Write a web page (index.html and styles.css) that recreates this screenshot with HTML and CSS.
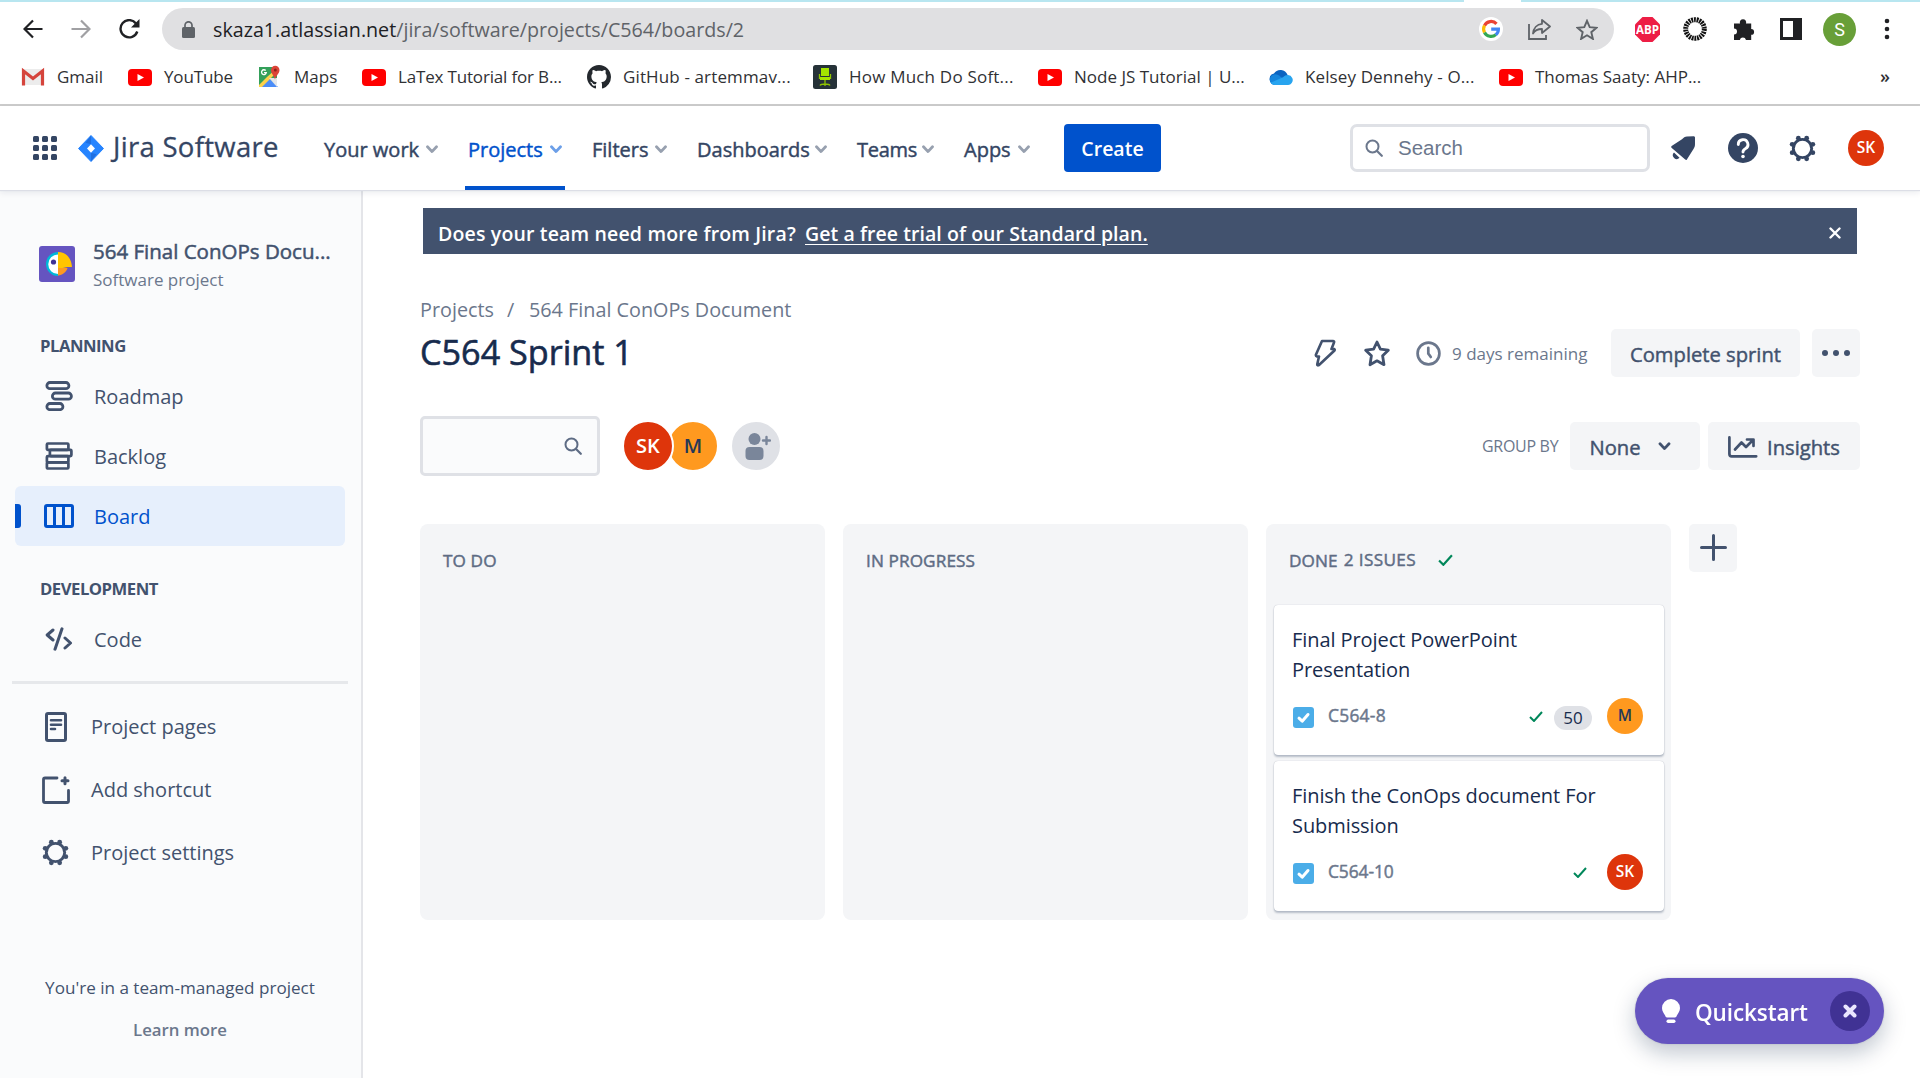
FILE: index.html
```html
<!DOCTYPE html>
<html lang="en">
<head>
<meta charset="utf-8">
<title>C564 Sprint 1 - Jira</title>
<link rel="stylesheet" href="styles.css">
</head>
<body>
<svg class="defs" width="0" height="0" aria-hidden="true">
  <symbol id="i-youtube" viewBox="0 0 24 24"><rect y="4" width="24" height="17" rx="4" fill="#f00"/><path d="M9.500 9v7l6.500-3.500z" fill="#fff"/></symbol>
  <symbol id="i-chevron" viewBox="0 0 12 9"><path d="M1.500 1.800 6 6.600l4.500-4.800" fill="none" stroke="currentColor" stroke-width="2.800" stroke-linecap="round" stroke-linejoin="round"/></symbol>
  <symbol id="i-search" viewBox="0 0 18 18"><circle cx="7.500" cy="7.500" r="6" fill="none" stroke="currentColor" stroke-width="2"/><path d="m12 12 4.800 4.800" stroke="currentColor" stroke-width="2.200" stroke-linecap="round"/></symbol>
  <symbol id="i-gear" viewBox="0 0 28 28"><g fill="currentColor"><circle cx="14" cy="14" r="11"/><circle cx="9.700" cy="3.300" r="2.500"/><circle cx="18.300" cy="3.300" r="2.500"/><circle cx="9.700" cy="24.700" r="2.500"/><circle cx="18.300" cy="24.700" r="2.500"/><circle cx="3.300" cy="9.700" r="2.500"/><circle cx="3.300" cy="18.300" r="2.500"/><circle cx="24.700" cy="9.700" r="2.500"/><circle cx="24.700" cy="18.300" r="2.500"/></g><circle cx="14" cy="14" r="8"/></symbol>
  <symbol id="i-check" viewBox="0 0 14 11"><path d="m1 6 4 4 8-9" fill="none" stroke="#00875a" stroke-width="2"/></symbol>
  <symbol id="i-task" viewBox="0 0 21 21"><rect width="21" height="21" rx="3" fill="#4bade8"/><path d="m6 11.200 3.200 3L15 7.500" fill="none" stroke="#fff" stroke-width="3" stroke-linecap="round" stroke-linejoin="round"/></symbol>
</svg>

<header class="chrome">
  <div class="tabstrip"></div>
  <div class="toolbar">
    <div class="nav-buttons">
      <svg width="20" height="20" viewBox="0 0 20 20" fill="none" stroke="#202124" stroke-width="2.200"><path d="M19.500 10H2M10 1.500 1.500 10l8.500 8.500"/></svg>
      <svg width="20" height="20" viewBox="0 0 20 20" fill="none" stroke="#a0a0a3" stroke-width="2.200"><path d="M.5 10H18M10 1.500l8.500 8.500-8.500 8.500"/></svg>
      <svg width="21" height="20" viewBox="0 0 21 20"><path d="M17 4.500A8.600 8.600 0 1 0 18.300 12.500" fill="none" stroke="#202124" stroke-width="2.400"/><path d="M20.500 0v8.500H12z" fill="#202124"/></svg>
    </div>
    <div class="omnibox">
      <svg width="13" height="17" viewBox="0 0 13 17"><rect y="6" width="13" height="11" rx="1.500" fill="#5f6368"/><path d="M3 7V4.300a3.500 3.500 0 0 1 7 0V7" fill="none" stroke="#5f6368" stroke-width="1.700"/></svg>
      <span class="url"><b>skaza1.atlassian.net</b>/jira/software/projects/C564/boards/2</span>
      <svg class="google" width="24" height="24" viewBox="0 0 24 24"><circle cx="12" cy="12" r="12" fill="#fff"/><g fill="none" stroke-width="3.200"><path d="M17.500 6.800A7.400 7.400 0 0 0 5.500 8.600" stroke="#ea4335"/><path d="M5.500 8.500a7.400 7.400 0 0 0 0 7" stroke="#fbbc05"/><path d="M5.500 15.400a7.400 7.400 0 0 0 11.400 2.200" stroke="#34a853"/><path d="M16.800 17.700a7.300 7.300 0 0 0 2.600-5.500H12.200" stroke="#4285f4"/></g></svg>
      <svg class="share" width="23" height="22" viewBox="0 0 23 22" fill="none" stroke="#5f6368" stroke-width="1.800"><path d="M1 6v15h17v-4"/><path d="M14 2l8 6.500-8 6.500v-4c-4 0-7 1-9 4.500C5.500 10 9 6.200 14 5.800z" stroke-linejoin="round"/></svg>
      <svg class="star" width="22" height="21" viewBox="0 0 22 21"><path d="m11 1.800 2.700 6.300 6.800.6-5.200 4.500 1.600 6.700L11 16.300l-5.900 3.600 1.600-6.700L1.500 8.700l6.800-.6z" fill="none" stroke="#5f6368" stroke-width="1.900"/></svg>
    </div>
    <div class="extensions">
      <svg width="25" height="25" viewBox="0 0 25 25"><path d="M7.500 0h10L25 7.500v10L17.500 25h-10L0 17.500v-10z" fill="#ed1e45"/><text x="12.500" y="16.900" text-anchor="middle" textLength="23" lengthAdjust="spacingAndGlyphs" class="abp">ABP</text></svg>
      <svg width="24" height="24" viewBox="0 0 24 24"><circle cx="12" cy="12" r="9.300" fill="none" stroke="#111" stroke-width="5" stroke-dasharray="1.850 .807"/></svg>
      <svg width="23" height="22" viewBox="0 0 23 22"><path d="M1 5.500h6a3.200 3.200 0 1 1 6 0h5.200V11a2.900 2.900 0 1 1 0 5.800V22h-5.200a3.200 3.200 0 0 0-6.200 0H1v-5.500a3 3 0 0 0 0-6z" fill="#202124"/></svg>
      <svg width="22" height="22" viewBox="0 0 22 22"><path d="M0 0h22v22H0zM3 3v16h10V3z" fill="#202124" fill-rule="evenodd"/></svg>
      <span class="profile">S</span>
      <svg width="6" height="22" viewBox="0 0 6 22" fill="#202124"><circle cx="3" cy="3" r="2.300"/><circle cx="3" cy="11" r="2.300"/><circle cx="3" cy="19" r="2.300"/></svg>
    </div>
  </div>
  <nav class="bookmarks">
    <a><svg viewBox="0 0 24 24"><path d="M1 4h22v16H1z" fill="#ececec"/><path d="M2.500 20.500V6L12 13.500 21.500 6v14.500" fill="none" stroke="#d5443c" stroke-width="3.200"/></svg>Gmail</a>
    <a class="t-youtube"><svg><use href="#i-youtube"/></svg>YouTube</a>
    <a><svg viewBox="0 0 24 24"><path d="M1 2h18v20H1z" fill="#34a05a"/><path d="m2 22 9-9 9 9z" fill="#4b8df8"/><path d="m1 20 8-8L19 3v4L4 22H1z" fill="#fdd24b"/><path d="m11 13 8 9v-9z" fill="#e4e6ea"/><path d="M17 14.500c-1-4-4-6-4-9.500a4.200 4.200 0 1 1 8.500 0c0 3.500-3.500 5.500-4.500 9.500z" fill="#dc4437"/><circle cx="17.300" cy="4.900" r="1.500" fill="#8c231b"/><path d="M7.700 5.500a2.400 2.400 0 1 0 .6 2.200H6" fill="none" stroke="#fff" stroke-width="1.300"/></svg>Maps</a>
    <a class="t-latex"><svg><use href="#i-youtube"/></svg>LaTex Tutorial for B...</a>
    <a class="t-github"><svg viewBox="0 0 16 16"><path fill="#24292e" d="M8 0C3.580 0 0 3.580 0 8c0 3.540 2.290 6.530 5.470 7.590.4.070.55-.17.55-.38 0-.19-.01-.82-.01-1.490-2.010.37-2.530-.49-2.690-.94-.09-.23-.48-.94-.82-1.130-.28-.15-.68-.52-.01-.53.63-.01 1.080.58 1.230.82.72 1.210 1.870.87 2.330.66.070-.52.280-.87.510-1.070-1.780-.2-3.640-.89-3.640-3.950 0-.87.310-1.590.820-2.150-.08-.2-.36-1.020.080-2.120 0 0 .67-.21 2.200.82.640-.18 1.320-.27 2-.27s1.360.09 2 .27c1.530-1.040 2.200-.82 2.200-.82.440 1.100.160 1.920.080 2.120.510.560.820 1.270.820 2.150 0 3.070-1.870 3.750-3.650 3.950.290.250.540.730.540 1.480 0 1.070-.01 1.930-.01 2.200 0 .21.150.46.550.38A8 8 0 0 0 16 8c0-4.420-3.580-8-8-8z"/></svg>GitHub - artemmav...</a>
    <a class="t-soft"><svg viewBox="0 0 24 24"><rect width="24" height="24" rx="2.500" fill="#263238"/><path d="M8 3h8v8H8zM7 12h10v3H7z" fill="#a4e400"/><path d="M12 15v6M7 20.500c1-2 9-2 10 0M6.500 9v5M17.500 9v5" fill="none" stroke="#8fc400" stroke-width="1.300"/></svg>How Much Do Soft...</a>
    <a><svg><use href="#i-youtube"/></svg>Node JS Tutorial | U...</a>
    <a class="t-kelsey"><svg viewBox="0 0 24 24"><path d="M6 19.500a5.500 5.500 0 0 1-1-10.900 7.500 7.500 0 0 1 13.500 1.200L21 15l-9 4z" fill="#0a63c0"/><path d="M1 16a5.500 5.500 0 0 1 8.500-5.700L19 17l-4 3H6a5.300 5.300 0 0 1-5-4z" fill="#1585dc"/><path d="M19 10a5 5 0 0 1 3.700 8A4.500 4.500 0 0 1 19.200 20H6c-2 0-3.500-1-4.300-2.200L14 12.300a6.500 6.500 0 0 1 5-2.300z" fill="#28a4ef"/></svg>Kelsey Dennehy - O...</a>
    <a><svg><use href="#i-youtube"/></svg>Thomas Saaty: AHP...</a>
    <span class="more">»</span>
  </nav>
</header>

<header class="topnav">
  <svg class="switcher" width="24" height="24" viewBox="0 0 24 24" fill="#344563"><rect width="6" height="6" rx="1.500"/><rect x="9" width="6" height="6" rx="1.500"/><rect x="18" width="6" height="6" rx="1.500"/><rect y="9" width="6" height="6" rx="1.500"/><rect x="9" y="9" width="6" height="6" rx="1.500"/><rect x="18" y="9" width="6" height="6" rx="1.500"/><rect y="18" width="6" height="6" rx="1.500"/><rect x="9" y="18" width="6" height="6" rx="1.500"/><rect x="18" y="18" width="6" height="6" rx="1.500"/></svg>
  <a class="logo">
    <svg width="26" height="27" viewBox="0 0 26 27"><path d="M13 .5 25.500 13.500 13 26.500.5 13.500z" fill="#2684ff" stroke="#2684ff" stroke-linejoin="round"/><path d="M13 .5v8.700l-5.500-1.500zM13 26.500v-8.700l5.500 1.500z" fill="#1f6fe0"/><path d="m13 9.300 4 4.200-4 4.200-4-4.200z" fill="#fff"/></svg>
    <span>Jira Software</span>
  </a>
  <nav class="menu">
    <a>Your work<svg><use href="#i-chevron"/></svg></a>
    <a class="active">Projects<svg><use href="#i-chevron"/></svg></a>
    <a>Filters<svg><use href="#i-chevron"/></svg></a>
    <a>Dashboards<svg><use href="#i-chevron"/></svg></a>
    <a class="teams">Teams<svg><use href="#i-chevron"/></svg></a>
    <a>Apps<svg><use href="#i-chevron"/></svg></a>
  </nav>
  <button class="create">Create</button>
  <div class="search"><svg width="18" height="18"><use href="#i-search"/></svg>Search</div>
  <div class="tools">
    <svg width="25" height="26" viewBox="0 0 25 26" fill="#344563"><path d="M24 3c.1-1.200-.5-1.800-1.500-1.800L16 1.500c-2 .2-3.500 1.200-5 2.800L1 10.800c-1 .7-1.100 1.400-.2 2.200l13.400 11.500c.9.800 1.700.6 2-.4L22.500 14c1-1.500 1.500-3 1.500-5z"/><path d="M3 17.500 8.500 22.800A3.600 3.600 0 0 1 3 17.500z"/></svg>
    <svg width="30" height="30" viewBox="0 0 30 30"><circle cx="15" cy="15" r="15" fill="#344563"/><path d="M10.300 11.500a4.800 4.800 0 1 1 7 4.200c-1.500.8-2.300 1.500-2.300 3.300" fill="none" stroke="#fff" stroke-width="2.900" stroke-linecap="round"/><circle cx="15" cy="23.500" r="1.800" fill="#fff"/></svg>
    <svg class="gear" width="27" height="27"><use href="#i-gear"/></svg>
    <span class="avatar red">SK</span>
  </div>
</header>

<div class="page">
  <aside class="sidebar">
    <div class="project">
      <svg width="36" height="36" viewBox="0 0 36 36"><rect width="36" height="36" rx="3" fill="#6554c0"/><path d="M19 6a12 12 0 0 0 0 24z" fill="#00b8d9"/><path d="M19 8.500a9.700 9.700 0 0 0 0 19.500z" fill="#fff"/><path d="M19 6c8 0 13.500 6 14 15h-4.500L19 23z" fill="#ffc400"/><path d="M19 22h9.500c-1 4-5 7-9.500 7.500z" fill="#ff991f"/><circle cx="14.500" cy="16" r="2.600" fill="#403294"/></svg>
      <div><strong>564 Final ConOPs Docu...</strong><small>Software project</small></div>
    </div>
    <h2>PLANNING</h2>
    <a class="item roadmap"><svg width="28" height="30" viewBox="0 0 28 30" fill="none" stroke="#42526e" stroke-width="2.800"><rect x="1.900" y="1.500" width="22" height="6.200" rx="3"/><rect x="7.400" y="12" width="19" height="6.200" rx="3"/><rect x="1.900" y="22.500" width="16" height="6.200" rx="3"/></svg>Roadmap</a>
    <a class="item backlog"><svg width="28" height="28" viewBox="0 0 28 28" fill="none" stroke="#42526e" stroke-width="2.700"><rect x="1.900" y="1.500" width="21.500" height="6.300" rx="1"/><rect x="4.900" y="7.800" width="21.500" height="6.300" rx="1"/><rect x="1.900" y="14.100" width="21.500" height="6.200" rx="1"/><rect x="1.900" y="20.300" width="21.500" height="6.200" rx="1"/></svg>Backlog</a>
    <a class="item board"><svg width="30" height="24" viewBox="0 0 30 24" fill="none" stroke="#0052cc" stroke-width="3"><rect x="1.500" y="1.500" width="27" height="21" rx="1.500"/><path d="M10.500 2v20M19.500 2v20"/></svg>Board</a>
    <h2 class="dev">DEVELOPMENT</h2>
    <a class="item code"><svg width="28" height="24" viewBox="0 0 28 24" fill="none" stroke="#42526e" stroke-width="3" stroke-linecap="round" stroke-linejoin="round"><path d="M8 3 2.200 8 8 13M20 11l5.500 5L20 21M17 1.800 10 22.200"/></svg>Code</a>
    <hr>
    <a class="item low"><svg width="28" height="30" viewBox="0 0 28 30" fill="none" stroke="#42526e" stroke-width="3"><rect x="4.500" y="1.500" width="19" height="27" rx="1.500"/><path d="M9 8.200h10M9 12.800h10M9 17h4" stroke-width="2.600" stroke-linecap="round"/></svg>Project pages</a>
    <a class="item low"><svg width="28" height="28" viewBox="0 0 28 28" fill="none" stroke="#42526e" stroke-width="2.800" stroke-linecap="round"><path d="M15 2H3Q1.500 2 1.500 3.500V25q0 1.500 1.500 1.500h22.500q1 0 1-1V14.500"/><path d="M23 1.800v6M20 4.800h6" stroke-width="3"/></svg>Add shortcut</a>
    <a class="item low"><svg class="gear side" width="27" height="27"><use href="#i-gear"/></svg>Project settings</a>
    <footer><p>You're in a team-managed project</p><a>Learn more</a></footer>
  </aside>

  <main>
    <div class="banner"><span>Does your team need more from Jira?</span><a>Get a free trial of our Standard plan.</a><svg width="12" height="12" viewBox="0 0 12 12"><path d="m1.500 1.500 9 9m0-9-9 9" stroke="#fff" stroke-width="2.400" stroke-linecap="round"/></svg></div>
    <div class="crumbs"><span>Projects</span><i>/</i><span>564 Final ConOPs Document</span></div>
    <div class="headline">
      <h1>C564 Sprint 1</h1>
      <div class="actions">
        <svg width="22" height="28" viewBox="0 0 22 28"><path d="M8 2h11q1.500 0 1 1.500L17.500 10H20q1 .5.500 1.500L5 26q-2 1-1.700-1L5 17.500H3q-1.500-.5-1-2z" fill="none" stroke="#42526e" stroke-width="2.600" stroke-linejoin="round"/></svg>
        <svg width="26" height="27" viewBox="0 0 26 27"><path d="m13 2 3.400 7.200 7.900 1-5.700 5.600 1.400 8.900-7-3.900-7 3.900 1.400-8.900-5.700-5.600 7.900-1z" fill="none" stroke="#42526e" stroke-width="2.800" stroke-linejoin="round"/></svg>
        <svg width="25" height="25" viewBox="0 0 25 25" fill="none" stroke="#6b778c" stroke-width="2.700"><circle cx="12.500" cy="12.500" r="10.900"/><path d="M12.300 6.800v5.700l2.500 3.500" stroke-linecap="round"/></svg>
        <span class="remaining">9 days remaining</span>
        <button class="btn complete">Complete sprint</button>
        <button class="btn dots"><svg width="28" height="6" viewBox="0 0 28 6" fill="#42526e"><circle cx="3" cy="3" r="3"/><circle cx="14" cy="3" r="3"/><circle cx="25" cy="3" r="3"/></svg></button>
      </div>
    </div>
    <div class="filters">
      <div class="field"><svg width="18" height="18"><use href="#i-search"/></svg></div>
      <div class="people"><span class="avatar big red">SK</span><span class="avatar big orange">M</span><span class="avatar big add"><svg width="26" height="27" viewBox="0 0 26 27" fill="#7a869a"><circle cx="9.500" cy="6" r="6"/><rect x=".5" y="14" width="18" height="13" rx="4"/><path d="M21.500 4v7M18 7.500h7" stroke="#7a869a" stroke-width="2.400" stroke-linecap="round"/></svg></span></div>
      <span class="groupby">GROUP BY</span>
      <button class="btn none">None<svg width="13" height="9"><use href="#i-chevron"/></svg></button>
      <button class="btn insights"><svg width="30" height="22" viewBox="0 0 30 22" fill="none" stroke="#42526e" stroke-width="2.700" stroke-linecap="round" stroke-linejoin="round"><path d="M1.400 1.400V18q0 2.300 2.300 2.300h24.500M7 13.500l6.500-7 4.500 4.500 7-7M19 3.500h6.500V10"/></svg>Insights</button>
    </div>
    <div class="columns">
      <section class="column"><h3>TO DO</h3></section>
      <section class="column"><h3>IN PROGRESS</h3></section>
      <section class="column">
        <h3 class="done">DONE <em>2 ISSUES</em><svg width="15" height="12"><use href="#i-check"/></svg></h3>
        <article class="card">
          <p>Final Project PowerPoint<br>Presentation</p>
          <div class="meta"><svg width="21" height="21"><use href="#i-task"/></svg><span class="key">C564-8</span><svg class="tick" width="14" height="11"><use href="#i-check"/></svg><span class="points">50</span><span class="avatar orange">M</span></div>
        </article>
        <article class="card">
          <p>Finish the ConOps document For<br>Submission</p>
          <div class="meta"><svg width="21" height="21"><use href="#i-task"/></svg><span class="key long">C564-10</span><svg class="tick" width="14" height="11"><use href="#i-check"/></svg><span class="avatar red">SK</span></div>
        </article>
      </section>
      <button class="btn plus"><svg width="27" height="27" viewBox="0 0 27 27"><path d="M13.500 1.500v24M1.500 13.500h24" stroke="#42526e" stroke-width="3" stroke-linecap="round"/></svg></button>
    </div>
  </main>
</div>

<div class="quickstart">
  <svg width="18" height="24" viewBox="0 0 18 24" fill="#fff"><path d="M9 0a9 9 0 0 1 9 9c0 3.500-1.800 5-3 7.300-.6 1.400-1 2.200-2 2.200H5c-1 0-1.400-.8-2-2.200C1.800 14 0 12.500 0 9a9 9 0 0 1 9-9z"/><rect x="4.500" y="20.500" width="9" height="3.500" rx="1.700"/></svg>
  <span>Quickstart</span>
  <b><svg width="14" height="14" viewBox="0 0 14 14"><path d="m2.500 2.500 9 9m0-9-9 9" stroke="#eae6ff" stroke-width="4" stroke-linecap="round"/></svg></b>
</div>
</body>
</html>
```
FILE: styles.css
```css
* { box-sizing: border-box; }
body { margin: 0; height: 1078px; overflow: hidden; background: #fff; font-family: "Open Sans", "Noto Sans", sans-serif; color: #42526e; white-space: nowrap; }
svg { flex: none; display: block; }
button { font: inherit; color: inherit; border: 0; margin: 0; padding: 0; }
.defs { position: absolute; }

/* browser chrome */
.chrome { height: 106px; border-bottom: 2px solid #cbcbcb; color: #3c4043; }
.tabstrip { height: 2px; background: linear-gradient(90deg, #b8e6f0 1464px, #fff 1464px 1521px, #b8e6f0 1521px); }
.toolbar { display: flex; height: 54px; align-items: center; }
.nav-buttons { display: flex; gap: 28px; width: 162px; padding-left: 23px; }
.omnibox { display: flex; align-items: center; width: 1452px; height: 42px; border-radius: 21px; background: #e0e0e2; padding-left: 20px; }
.url { width: 1263px; margin-left: 18px; font-size: 19.700px; color: #5f6368; }
.url b { font-weight: 400; color: #202124; }
.google { margin-left: 3px; }
.share { margin-left: 25px; }
.star { margin-left: 25px; }
.extensions { display: flex; align-items: center; margin-left: 21px; }
.extensions > :nth-child(2) { margin-left: 23px; }
.extensions > :nth-child(3) { margin-left: 26px; }
.extensions > :nth-child(4) { margin-left: 24px; }
.extensions > :nth-child(5) { margin-left: 21px; }
.extensions > :nth-child(6) { margin-left: 28px; }
.abp { font: 700 13px "Open Sans", sans-serif; fill: #fff; }
.profile { width: 33px; height: 33px; border-radius: 50%; background: #689f38; color: #fff; font: 18px/33px Roboto, sans-serif; text-align: center; }
.bookmarks { display: grid; grid-template-columns: 107px 130px 104px 225px 226px 225px 231px 230px 381px auto; padding-left: 21px; height: 42px; align-items: center; font-size: 17px; color: #303134; }
.bookmarks a { display: flex; align-items: center; gap: 12px; line-height: 24px; padding-bottom: 1px; }
.bookmarks svg { width: 24px; height: 24px; }
.t-youtube { letter-spacing: -.15px; }
.t-latex { letter-spacing: -.17px; }
.t-github { letter-spacing: .13px; }
.t-soft { letter-spacing: .2px; }
.t-kelsey { letter-spacing: .12px; }
.more { font-weight: 600; font-size: 18px; padding-bottom: 3px; }

/* product navigation */
.topnav { position: relative; z-index: 1; display: flex; height: 84px; align-items: center; padding-left: 33px; box-shadow: 0 1px 1px #dcdee6, 0 3px 6px #091e4214; background: #fff; color: #344563; }
.logo { display: flex; align-items: center; width: 246px; margin-left: 21px; }
.logo span { margin: -3px 0 0 9px; font-size: 27.500px; letter-spacing: .3px; -webkit-text-stroke: .3px; }
.menu { display: grid; grid-template-columns: 114px 94px 75px 130px 77px 66px; gap: 30px; width: 740px; height: 84px; font-size: 20px; -webkit-text-stroke: .45px; }
.menu a { display: flex; align-items: center; justify-content: space-between; position: relative; padding-top: 2px; }
.menu svg { width: 12px; height: 9px; color: #97a0af; }
.menu .active { color: #0052cc; }
.menu .teams { letter-spacing: -.3px; }
.menu .active svg { color: #6c9fe8; }
.menu .active::after { content: ""; position: absolute; left: -3px; right: -3px; bottom: 0; height: 4px; background: #0052cc; }
.create { width: 97px; height: 48px; padding-top: 1px; border-radius: 4px; background: #0052cc; color: #fff; font-size: 19.500px; font-weight: 600; }
.search { display: flex; align-items: center; gap: 15px; width: 300px; height: 48px; margin-left: 189px; padding-left: 12px; border: 3px solid #dfe1e6; border-radius: 7px; color: #6b778c; font: 20.500px "Liberation Sans", sans-serif; }
.tools { display: flex; align-items: center; margin-left: 21px; }
.tools > :nth-child(2) { margin-left: 32px; }
.tools > :nth-child(3) { margin-left: 31px; }
.tools > :nth-child(4) { margin-left: 32px; }
.gear { color: #344563; fill: #fff; }
.gear.side { color: #42526e; fill: #fafbfc; }
.avatar { display: block; width: 36px; height: 36px; border-radius: 50%; font-size: 15.500px; font-weight: 600; line-height: 35px; text-align: center; }
.red { background: #de350b; color: #fff; }
.orange { background: #ff991f; color: #253858; }

/* sidebar */
.page { display: flex; height: 888px; }
.sidebar { width: 363px; flex: none; border-right: 2px solid #e4e5e9; background: #fafbfc; padding-top: 46px; font-size: 20px; }
.project { display: flex; height: 64px; padding: 10px 0 0 39px; gap: 18px; }
.project div { margin-top: -10px; }
.project strong { display: block; font-size: 20.500px; font-weight: 400; line-height: 31px; -webkit-text-stroke: .5px; }
.project small { display: block; font-size: 17px; line-height: 26px; color: #6b778c; }
h2 { margin: 36px 0 20px 40px; font-size: 16.700px; font-weight: 700; line-height: 20px; letter-spacing: -.5px; }
.item { display: flex; align-items: center; height: 60px; }
.item svg { margin-left: 45px; margin-right: 21px; }
h2 + .item { margin-top: -10px; }
.board { position: relative; width: 330px; margin-left: 15px; border-radius: 6px; background: #e6effc; color: #0052cc; }
.item.board svg { margin-left: 29px; margin-right: 20px; }
.board::before { content: ""; position: absolute; left: 0; top: 18px; width: 6px; height: 24px; background: #0052cc; border-radius: 0 3px 3px 0; }
h2.dev { margin: 33px 0 20px 40px; }
hr { width: 336px; height: 3px; margin: 12px 0 11px 12px; border: 0; background: #e6e8eb; }
.low { height: 63px; }
.item.low svg { margin-left: 42px; }
.item.low svg.side { margin-right: 22px; }
footer { width: 360px; padding-top: 89px; text-align: center; font-size: 17.100px; }
footer p { margin: 0; line-height: 30px; }
footer a { display: block; margin-top: 12px; line-height: 30px; color: #6b778c; font-weight: 600; font-size: 16.800px; }

/* board */
main { flex: 1; padding: 18px 0 0 57px; }
.banner { display: flex; align-items: center; width: 1434px; height: 46px; margin-left: 3px; padding: 4px 0 0 15px; background: #42526e; color: #fff; font-size: 19.500px; font-weight: 600; }
.banner span { width: 367px; letter-spacing: .16px; }
.banner a { width: 343px; letter-spacing: .06px; text-decoration: underline; text-underline-offset: 3px; }
.banner svg { margin-left: 681px; }
.crumbs { display: flex; height: 30px; margin-top: 41px; line-height: 30px; font-size: 19.800px; color: #6b778c; }
.crumbs span:first-child { width: 87px; }
.crumbs i { width: 22px; font-style: normal; }
.headline { display: flex; height: 54px; margin-top: 2px; }
h1 { width: 894px; margin: 0; font-size: 34.200px; font-weight: 400; line-height: 49px; color: #172b4d; -webkit-text-stroke: .6px; }
.actions { display: flex; height: 48px; margin-top: 2px; align-items: center; }
.actions > :nth-child(2) { margin-left: 28px; }
.actions > :nth-child(3) { margin-left: 26px; }
.remaining { width: 159px; margin-left: 11px; font-size: 17px; color: #6b778c; }
.btn { display: flex; align-items: center; justify-content: center; height: 48px; border-radius: 5px; background: #f4f5f7; font-size: 20.200px; -webkit-text-stroke: .45px; }
.complete { width: 189px; padding-top: 1px; }
.dots { width: 48px; margin-left: 12px; }
.filters { display: flex; align-items: center; height: 60px; margin-top: 35px; }
.field { display: flex; align-items: center; justify-content: flex-end; width: 180px; height: 60px; padding-right: 15px; border: 3px solid #dfe1e6; border-radius: 5px; background: #fafbfc; color: #5e6c84; }
.people { display: flex; width: 861px; margin-left: 22px; }
.big { width: 52px; height: 52px; border: 2px solid #fff; font-size: 20px; line-height: 47px; position: relative; z-index: 1; }
.orange.big { margin-left: -7px; z-index: 0; }
.add { display: flex; align-items: center; justify-content: center; margin-left: 11px; background: #dfe1e6; }
.add svg { margin-left: 4px; }
.groupby { width: 88px; margin-left: -1px; font-size: 16px; letter-spacing: -.3px; color: #6b778c; }
.none { width: 130px; gap: 17px; padding: 1px 10px 0 0; }
.insights { width: 152px; margin-left: 8px; padding-top: 1px; gap: 9px; }
.columns { display: flex; margin-top: 48px; gap: 18px; }
.column { width: 405px; height: 396px; border-radius: 8px; background: #f4f5f7; padding: 0 8px; }
h3 { display: flex; align-items: center; height: 81px; margin: 0; padding: 0 0 9px 15px; font-size: 17.200px; letter-spacing: .1px; font-weight: 400; color: #5e6c84; -webkit-text-stroke: .45px; }
.done em { margin: -2px 22px 0 6px; font-style: normal; letter-spacing: .35px; }
.card { width: 390px; height: 150px; margin-bottom: 6px; padding: 20px 18px 0; border-radius: 4px; background: #fff; box-shadow: 0 2px 2px #091e4240, 0 0 1px #091e424f; color: #172b4d; }
.card p { margin: 0; font-size: 20px; line-height: 30px; letter-spacing: -.08px; }
.meta { display: flex; align-items: center; height: 36px; margin-top: 13px; padding-right: 3px; }
.meta > svg:first-child { margin: 3px 0 0 1px; }
.key { margin: -2px 0 0 14px; font-size: 17.400px; letter-spacing: .25px; color: #6b778c; -webkit-text-stroke: .45px; }
.key.long { letter-spacing: -.1px; }
.tick { margin-left: auto; }
.tick + .avatar { margin-left: 20px; }
.points { width: 38px; height: 24px; margin: 4px 15px 0 11px; border-radius: 12px; background: #dfe1e6; font-size: 17px; line-height: 24px; text-align: center; }
.plus { width: 48px; }
.plus svg { margin-top: -1px; }

/* floating help launcher */
.quickstart { position: fixed; left: 1635px; top: 978px; z-index: 2; display: flex; align-items: center; width: 249px; height: 66px; padding-left: 27px; border-radius: 33px; background: #6554c0; color: #fff; font-size: 22.500px; font-weight: 600; box-shadow: 0 9px 22px #091e4240, 0 0 2px #091e4230; }
.quickstart span { width: 118px; margin: 2px 0 0 15px; letter-spacing: -.1px; }
.quickstart b { display: flex; align-items: center; justify-content: center; width: 40px; height: 40px; margin-left: 17px; border-radius: 50%; background: #403294; }
```
